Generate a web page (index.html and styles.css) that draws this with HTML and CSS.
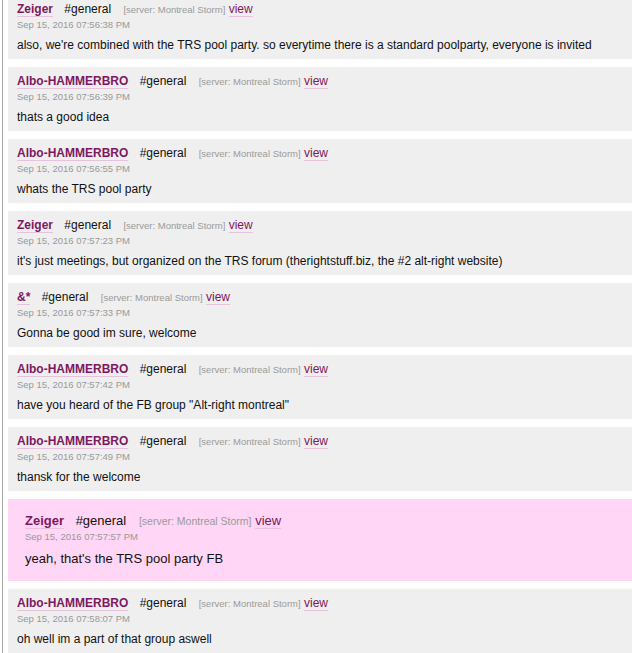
FILE: index.html
```html
<!DOCTYPE html>
<html lang="en">
<head>
    <meta charset="UTF-8">
    <meta name="viewport" content="width=device-width, initial-scale=1.0">
    <title>Montreal Storm - #general</title>
    <link rel="stylesheet" href="styles.css">
</head>
<body>
    <div class="log">
        <div class="msg">
            <div class="meta">
                <a class="author" href="#">Zeiger</a>
                <span class="channel">#general</span>
                <span class="server">[server: Montreal Storm]</span>
                <a class="view" href="#">view</a>
            </div>
            <div class="date">Sep 15, 2016 07:56:38 PM</div>
            <div class="text">also, we're combined with the TRS pool party. so everytime there is a standard poolparty, everyone is invited</div>
        </div>

        <div class="msg">
            <div class="meta">
                <a class="author" href="#">Albo-HAMMERBRO</a>
                <span class="channel">#general</span>
                <span class="server">[server: Montreal Storm]</span>
                <a class="view" href="#">view</a>
            </div>
            <div class="date">Sep 15, 2016 07:56:39 PM</div>
            <div class="text">thats a good idea</div>
        </div>

        <div class="msg">
            <div class="meta">
                <a class="author" href="#">Albo-HAMMERBRO</a>
                <span class="channel">#general</span>
                <span class="server">[server: Montreal Storm]</span>
                <a class="view" href="#">view</a>
            </div>
            <div class="date">Sep 15, 2016 07:56:55 PM</div>
            <div class="text">whats the TRS pool party</div>
        </div>

        <div class="msg">
            <div class="meta">
                <a class="author" href="#">Zeiger</a>
                <span class="channel">#general</span>
                <span class="server">[server: Montreal Storm]</span>
                <a class="view" href="#">view</a>
            </div>
            <div class="date">Sep 15, 2016 07:57:23 PM</div>
            <div class="text">it's just meetings, but organized on the TRS forum (therightstuff.biz, the #2 alt-right website)</div>
        </div>

        <div class="msg">
            <div class="meta">
                <a class="author" href="#">&amp;*</a>
                <span class="channel">#general</span>
                <span class="server">[server: Montreal Storm]</span>
                <a class="view" href="#">view</a>
            </div>
            <div class="date">Sep 15, 2016 07:57:33 PM</div>
            <div class="text">Gonna be good im sure, welcome</div>
        </div>

        <div class="msg">
            <div class="meta">
                <a class="author" href="#">Albo-HAMMERBRO</a>
                <span class="channel">#general</span>
                <span class="server">[server: Montreal Storm]</span>
                <a class="view" href="#">view</a>
            </div>
            <div class="date">Sep 15, 2016 07:57:42 PM</div>
            <div class="text">have you heard of the FB group "Alt-right montreal"</div>
        </div>

        <div class="msg">
            <div class="meta">
                <a class="author" href="#">Albo-HAMMERBRO</a>
                <span class="channel">#general</span>
                <span class="server">[server: Montreal Storm]</span>
                <a class="view" href="#">view</a>
            </div>
            <div class="date">Sep 15, 2016 07:57:49 PM</div>
            <div class="text">thansk for the welcome</div>
        </div>

        <!-- linked message -->
        <div class="msg selected">
            <div class="meta">
                <a class="author" href="#">Zeiger</a>
                <span class="channel">#general</span>
                <span class="server">[server: Montreal Storm]</span>
                <a class="view" href="#">view</a>
            </div>
            <div class="date">Sep 15, 2016 07:57:57 PM</div>
            <div class="text">yeah, that's the TRS pool party FB</div>
        </div>

        <div class="msg">
            <div class="meta">
                <a class="author" href="#">Albo-HAMMERBRO</a>
                <span class="channel">#general</span>
                <span class="server">[server: Montreal Storm]</span>
                <a class="view" href="#">view</a>
            </div>
            <div class="date">Sep 15, 2016 07:58:07 PM</div>
            <div class="text">oh well im a part of that group aswell</div>
        </div>
    </div>
</body>
</html>
```

FILE: styles.css
```css
* {
    margin: 0;
    padding: 0;
    box-sizing: border-box;
}

body {
    font-family: "Liberation Sans", Arial, Helvetica, sans-serif;
    background: #fff;
    color: #111;
    overflow: hidden;
}

.log {
    margin-left: 2px;
    margin-top: -5px;
    padding-left: 5px;
    border-left: 1px solid #a8a8a8;
    display: flex;
    flex-direction: column;
    gap: 8px;
    min-height: 700px;
}

.msg {
    background: #efefef;
    padding: 5px 9px 6px;
}

.meta {
    height: 18px;
    font-size: 12px;
    line-height: 18px;
    white-space: nowrap;
}

.author {
    color: #80175f;
    font-weight: bold;
    text-decoration: none;
    border-bottom: 1px solid #e6c3dc;
    margin-right: 8px;
}

.channel {
    color: #111;
    margin-right: 9px;
}

.server {
    color: #9a9a9a;
    font-size: 9.5px;
    line-height: 1;
}

.view {
    color: #80175f;
    text-decoration: none;
    border-bottom: 1px solid #e6c3dc;
}

.date {
    height: 14px;
    color: #999;
    font-size: 9.5px;
    line-height: 14px;
}

.text {
    font-size: 12px;
    line-height: 16px;
    margin-top: 5px;
}

.selected {
    background: #ffd6f5;
    padding: 13px 17px;
}

.selected .meta {
    font-size: 13px;
}

.selected .server {
    font-size: 10.5px;
}

.selected .text {
    font-size: 13px;
    line-height: 18px;
    margin-top: 6px;
}
```
